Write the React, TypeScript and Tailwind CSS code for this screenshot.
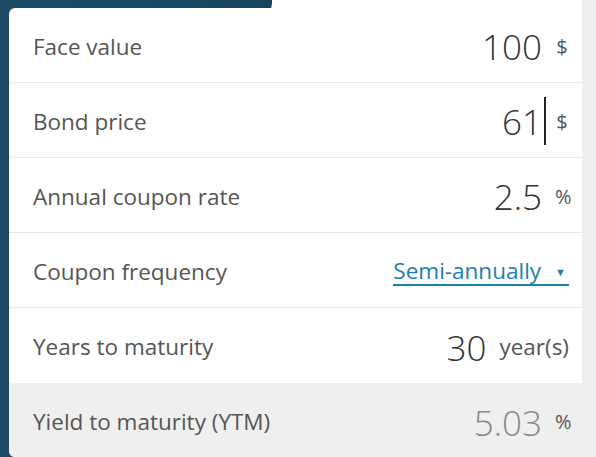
import { ChangeEvent, useState } from 'react';

type Row = {
  label: string;
  value: string;
  unit: string;
  caret?: boolean;
};

const rows: Row[] = [
  { label: 'Face value', value: '100', unit: '$' },
  { label: 'Bond price', value: '61', unit: '$', caret: true },
  { label: 'Annual coupon rate', value: '2.5', unit: '%' },
];

function InputRow({ row }: { row: Row }) {
  return (
    <div className="flex h-[75px] items-center justify-between border-b border-[#e9e9e9] pl-6 pr-[13px] pt-[3px]">
      <span className="text-[22.5px] text-[#555]">{row.label}</span>
      <div className="flex items-center gap-[13px]">
        <span className="relative text-[35px] font-[350] leading-none text-[#333]">
          {row.value}
          {row.caret && <span className="absolute -right-[4px] top-[-7px] h-[48px] w-[2px] bg-[#222]" />}
        </span>
        <span className="w-[14px] text-center text-[20px] text-[#555]">{row.unit}</span>
      </div>
    </div>
  );
}

export default function App() {
  const [freq, setFreq] = useState('Semi-annually');

  return (
    <div
      className="flex h-[457px] w-[596px] overflow-hidden bg-[linear-gradient(97deg,#1e4c68_0%,#17445c_41.7%,#ffffff_41.8%)]"
      style={{ fontFamily: '"Open Sans", "Noto Sans", sans-serif' }}
    >
      <div className="flex-1 pl-[9px] pt-2">
        <div className="h-full overflow-hidden rounded-l-[6px] bg-white">
          {rows.map((r) => (
            <InputRow key={r.label} row={r} />
          ))}

          <div className="flex h-[75px] items-center justify-between border-b border-[#e9e9e9] pl-6 pr-[13px] pt-[3px]">
            <span className="text-[22.5px] text-[#555]">Coupon frequency</span>
            <label className="relative flex h-[29px] items-start gap-[14px] border-b-2 border-[#1a82ad] text-[22.5px] leading-[28px] text-[#1a82ad]">
              <span>{freq}</span>
              <span className="pr-[3px] pt-[1px] text-[11px]">▼</span>
              <select
                value={freq}
                onChange={(e: ChangeEvent<HTMLSelectElement>) => setFreq(e.target.value)}
                className="absolute inset-0 opacity-0"
              >
                <option>Annually</option>
                <option>Semi-annually</option>
                <option>Quarterly</option>
                <option>Monthly</option>
              </select>
            </label>
          </div>

          <div className="flex h-[75px] items-center justify-between pl-6 pr-[13px] pt-[3px]">
            <span className="text-[22.5px] text-[#555]">Years to maturity</span>
            <div className="flex items-center gap-[13px]">
              <span className="text-[35px] font-[350] leading-none text-[#333]">30</span>
              <span className="text-[22.5px] text-[#555]">year(s)</span>
            </div>
          </div>

          <div className="flex h-[75px] items-center justify-between bg-[#efefef] pl-6 pr-[13px] pt-[3px]">
            <span className="text-[22.5px] text-[#555]">Yield to maturity (YTM)</span>
            <div className="flex items-center gap-[13px]">
              <span className="text-[35px] font-[350] leading-none text-[#888]">5.03</span>
              <span className="w-[14px] text-center text-[20px] text-[#555]">%</span>
            </div>
          </div>
        </div>
      </div>
      <div className="w-[14px] bg-[#efefef]" />
    </div>
  );
}
